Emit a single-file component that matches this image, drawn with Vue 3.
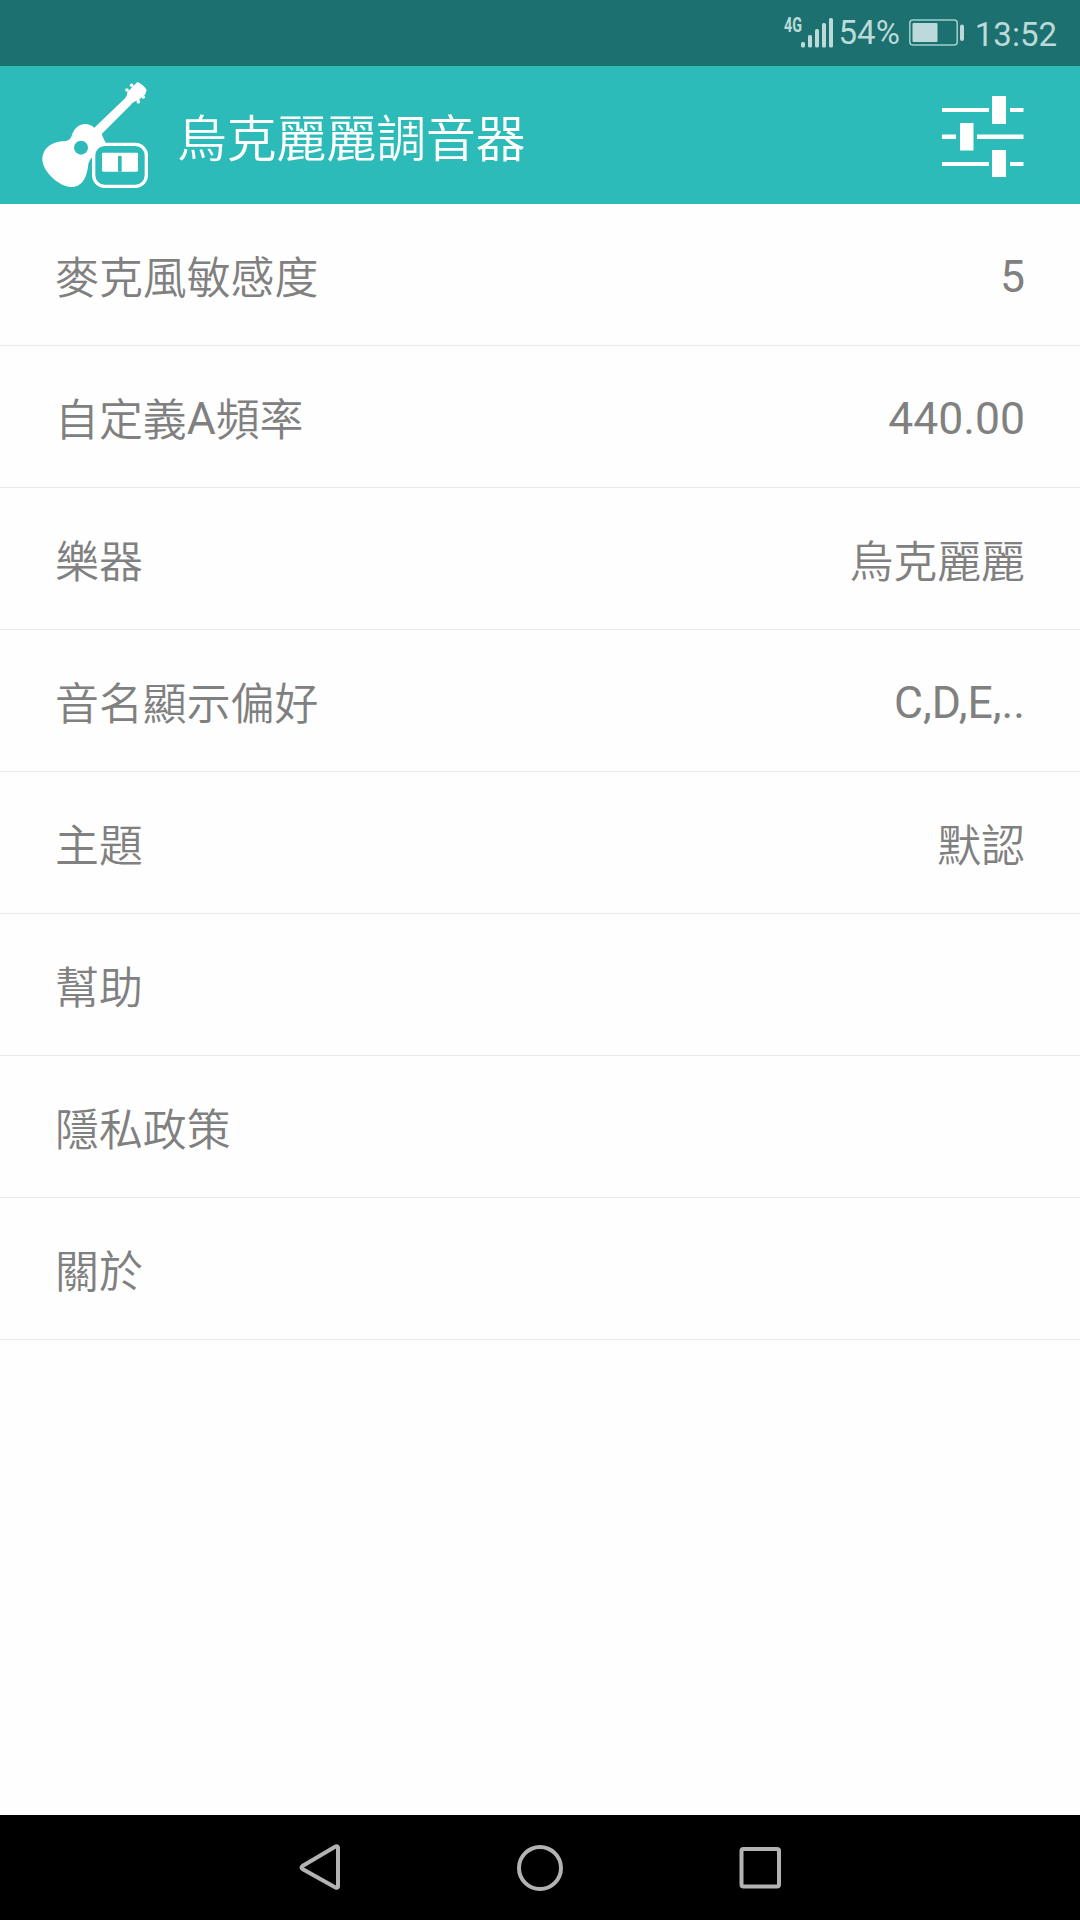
<template>
  <div class="screen">
    <div class="status-bar">
      <svg class="signal" width="52" height="66" viewBox="0 0 52 66">
        <text x="0" y="31.5" textLength="18" lengthAdjust="spacingAndGlyphs">4G</text>
        <rect x="17" y="42" width="4" height="5.5" rx="1.5" />
        <rect x="24" y="35" width="4" height="12.5" rx="1.5" />
        <rect x="31" y="29" width="4" height="18.5" rx="1.5" />
        <rect x="38" y="23" width="4" height="24.5" rx="1.5" />
        <rect x="45" y="18" width="4" height="29.5" rx="1.5" />
      </svg>
      <span class="percent">54%</span>
      <svg class="battery" width="56" height="66" viewBox="0 0 56 66">
        <rect x="0.8" y="20" width="47.4" height="25" rx="3" class="battery-frame" />
        <rect x="3.5" y="23" width="25" height="19" rx="1" />
        <rect x="51" y="24.5" width="4" height="16.5" rx="2" />
      </svg>
      <span class="clock">13:52</span>
    </div>

    <header class="app-bar">
      <svg class="logo" width="130" height="130" viewBox="0 0 390 390">
        <path
          d="M322 36 Q338 42 350 59 L346 73 L326 90 Q310 94 302 105 L215 192 Q220 206 228 220 L196 256 Q176 264 174 290 C170 318 160 350 124 351 C88 351 38 306 37 268 C39 226 78 213 103 214 Q120 212 125 198 C134 164 168 151 193 173 L286 84 Q292 76 292 67 Z"
        />
        <circle cx="291" cy="60" r="5.5" />
        <circle cx="305" cy="46" r="5.5" />
        <circle cx="325" cy="95" r="5.5" />
        <circle cx="340" cy="81" r="5.5" />
        <circle cx="153" cy="233" r="21" class="hole" />
        <rect x="191" y="223" width="158" height="126" rx="33" class="meter" />
        <rect x="216" y="248" width="108" height="57" rx="4" />
        <path d="M264 305 V259 Q269 255 275 259 V305 Z" class="hole" />
      </svg>
      <h1 class="title">烏克麗麗調音器</h1>
      <svg class="tune" width="130" height="110" viewBox="0 0 130 110">
        <path d="M22 28h47v4h-47z M90 28h13.5v4h-13.5z M72 16h14v28h-14z" />
        <path d="M22 54.5h14v4.5h-14z M57 54.5h46.5v4.5h-46.5z M40 43h13.5v27.5h-13.5z" />
        <path d="M22 82h47v4h-47z M90 82h13.5v4h-13.5z M72 70h14v27h-14z" />
      </svg>
    </header>

    <ul class="settings">
      <li v-for="item in settings" :key="item.label" class="row">
        <span class="label">
          <span v-for="part in splitLatin(item.label)" :key="part" :class="textClass(part)">{{ part }}</span>
        </span>
        <span v-if="item.value" :class="textClass(item.value)">{{ item.value }}</span>
      </li>
    </ul>

    <nav class="nav-bar">
      <svg width="60" height="60" viewBox="0 0 60 60">
        <path d="M48 9.5 V48.5 Q47.5 50.5 45.5 49.5 L12.5 31 Q10.5 29.5 12.5 28 L45.5 8.5 Q47.5 7.5 48 9.5 Z" />
      </svg>
      <svg width="60" height="60" viewBox="0 0 60 60">
        <circle cx="30" cy="30" r="21" />
      </svg>
      <svg width="60" height="60" viewBox="0 0 60 60">
        <rect x="11.5" y="11" width="37.5" height="37.5" rx="2" />
      </svg>
    </nav>
  </div>
</template>

<script setup>
import { ref } from "vue";

const settings = ref([
  { label: "麥克風敏感度", value: "5" },
  { label: "自定義A頻率", value: "440.00" },
  { label: "樂器", value: "烏克麗麗" },
  { label: "音名顯示偏好", value: "C,D,E,.." },
  { label: "主題", value: "默認" },
  { label: "幫助" },
  { label: "隱私政策" },
  { label: "關於" },
]);

// Latin letters and Chinese characters use different weights
const splitLatin = (text) => text.split(/([A-Za-z]+)/).filter(Boolean);
const textClass = (text) => (/^[\x20-\x7e]+$/.test(text) ? "latin" : "cjk");
</script>

<style>
body {
  margin: 0;
}
</style>

<style scoped>
.screen {
  width: 1080px;
  height: 1920px;
  display: flex;
  flex-direction: column;
  background: #fefefe;
  font-family: Roboto, "Noto Sans CJK SC", sans-serif;
  overflow: hidden;
}

/* Status bar */
.status-bar {
  height: 66px;
  flex: none;
  display: flex;
  justify-content: flex-end;
  box-sizing: border-box;
  padding-right: 23px;
  background: #1c706f;
  color: #bbdad9;
  fill: #bbdad9;
  font-size: 33px;
  line-height: 66px;
}

.signal text {
  font-size: 20px;
  font-weight: 700;
}

.percent {
  margin-left: 3px;
}

.battery {
  margin-left: 9px;
}

.battery-frame {
  fill: none;
  stroke: #9fcfcd;
  stroke-width: 1.5;
}

.clock {
  margin-left: 10px;
  padding-top: 2px;
}

/* App bar */
.app-bar {
  height: 138px;
  flex: none;
  display: flex;
  align-items: center;
  box-sizing: border-box;
  padding: 0 30px;
  background: #2dbbb9;
  color: #fff;
  fill: #fff;
}

.hole {
  fill: #2dbbb9;
}

.meter {
  fill: #2dbbb9;
  stroke: #fff;
  stroke-width: 10;
}

.title {
  flex: 1;
  margin: 0 0 0 17px;
  padding-top: 9px;
  font-size: 49.8px;
  font-weight: 350;
  line-height: 60px;
}

/* Settings list */
.settings {
  flex: 1;
  margin: 0;
  padding: 0;
  list-style: none;
}

.row {
  height: 142px;
  display: flex;
  align-items: center;
  justify-content: space-between;
  box-sizing: border-box;
  padding: 5px 55px 0;
  border-bottom: 1px solid #e9e9e9;
  color: #808080;
  font-size: 44.5px;
  line-height: 60px;
}

.label {
  display: flex;
  align-items: center;
}

.cjk {
  padding-top: 4px;
  font-size: 43.9px;
  font-weight: 350;
}

/* Navigation bar */
.nav-bar {
  height: 105px;
  flex: none;
  display: flex;
  align-items: center;
  justify-content: center;
  gap: 160px;
  background: #000;
}

.nav-bar svg {
  fill: none;
  stroke: #b3b3b3;
  stroke-width: 4;
}
</style>
